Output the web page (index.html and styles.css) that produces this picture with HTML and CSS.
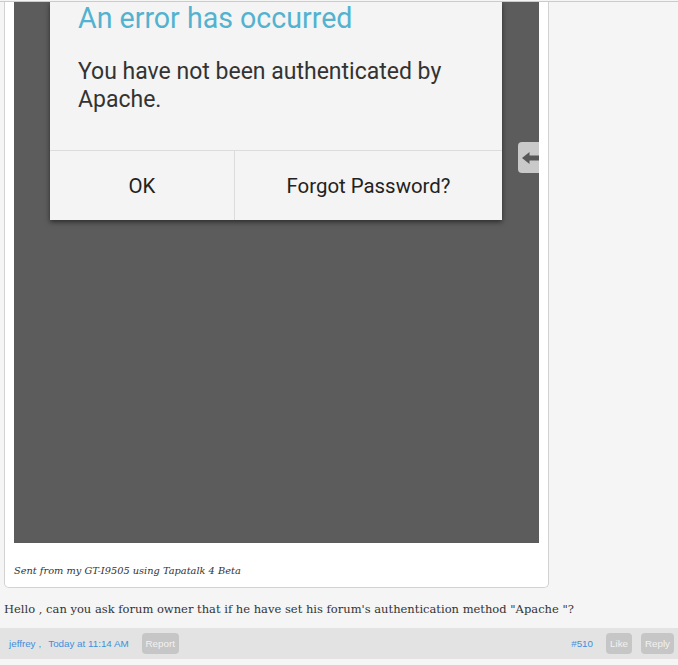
FILE: index.html
```html
<!DOCTYPE html>
<html>
<head>
<meta charset="utf-8">
<link rel="stylesheet" href="styles.css">
</head>
<body>
<div class="page">
  <div class="card">
    <div class="shot">
      <div class="dialog">
        <div class="dlg-title">An error has occurred</div>
        <div class="dlg-body">You have not been authenticated by Apache.</div>
        <div class="dlg-buttons">
          <div class="dlg-btn ok">OK</div>
          <div class="dlg-btn forgot">Forgot Password?</div>
        </div>
      </div>
      <div class="tab">
        <svg width="21" height="31" viewBox="0 0 21 31"><polygon points="4,16 11.5,10 11.5,22" fill="#575757"/><rect x="11" y="13.5" width="12" height="5" fill="#575757"/></svg>
      </div>
    </div>
    <div class="sig">Sent from my GT-I9505 using Tapatalk 4 Beta</div>
  </div>
  <div class="msg">Hello , can you ask forum owner that if he have set his forum's authentication method "Apache "?</div>
  <div class="bar">
    <div class="meta">
      <span class="link author">jeffrey</span><span class="comma">,</span>
      <span class="link date">Today at 11:14 AM</span>
      <span class="btn report">Report</span>
    </div>
    <div class="actions">
      <span class="link num">#510</span>
      <span class="btn like">Like</span>
      <span class="btn reply">Reply</span>
    </div>
  </div>
</div>
</body>
</html>
```

FILE: styles.css
```css
html, body {
  margin: 0;
  padding: 0;
  background: #f5f5f5;
}
.page {
  width: 678px;
  margin-top: 1px;
  border-top: 1px solid #cbcbcb;
}
.card {
  width: 545px;
  box-sizing: border-box;
  margin-left: 4px;
  padding: 0 9px;
  background: #fff;
  border: 1px solid #d2d2d2;
  border-top: none;
  border-radius: 0 0 5px 5px;
}
.shot {
  height: 541px;
  background: #5c5c5c;
  position: relative;
  overflow: hidden;
}
.dialog {
  position: absolute;
  left: 36px;
  top: 0;
  width: 452px;
  height: 218px;
  background: #f4f4f4;
  box-shadow: 0 2px 5px rgba(0,0,0,0.55);
  font-family: Roboto, "Noto Sans", sans-serif;
  display: flex;
  flex-direction: column;
}
.dlg-title {
  color: #52b2cf;
  font-size: 28.6px;
  line-height: 32px;
  padding-left: 28px;
}
.dlg-body {
  color: #333;
  font-size: 23px;
  line-height: 28px;
  padding: 0 20px 0 28px;
  margin-top: 24px;
  height: 56px;
  margin-bottom: 36px;
}
.dlg-buttons {
  display: flex;
  border-top: 1px solid #dcdcdc;
  flex: 1;
}
.dlg-btn {
  display: flex;
  align-items: center;
  justify-content: center;
  font-size: 20.4px;
  color: #222;
}
.dlg-btn.ok {
  width: 184px;
  border-right: 1px solid #dcdcdc;
}
.dlg-btn.forgot {
  flex: 1;
}
.tab {
  position: absolute;
  left: 504px;
  top: 140px;
  width: 30px;
  height: 31px;
  background: #c9c9c9;
  border-radius: 4px;
}
.tab svg { display: block; }
.sig {
  font-family: "DejaVu Serif", Georgia, serif;
  font-style: italic;
  font-size: 9.8px;
  line-height: 16px;
  color: #333;
  padding: 20px 0 8px;
}
.msg {
  font-family: "DejaVu Serif", Georgia, serif;
  font-size: 11.5px;
  line-height: 20px;
  color: #333;
  padding-left: 4px;
  margin: 11px 0 9px;
}
.bar {
  height: 31px;
  background: #e3e3e3;
  display: flex;
  align-items: center;
  justify-content: space-between;
  padding: 0 4px 0 9px;
  font-family: "Liberation Sans", Arial, sans-serif;
  font-size: 9.8px;
  margin-bottom: 6px;
}
.meta, .actions {
  display: flex;
  align-items: center;
}
.link { color: #3f8fdc; }
.comma { color: #3f8fdc; margin-left: 3px; }
.date { margin-left: 7px; }
.btn {
  background: #c6c6c6;
  color: #f2f2f2;
  border-radius: 4px;
  height: 21px;
  display: inline-flex;
  align-items: center;
  justify-content: center;
}
.report { width: 37px; margin-left: 13px; }
.num { margin-right: 13px; }
.like { width: 26px; margin-right: 9px; }
.reply { width: 33px; }
```
